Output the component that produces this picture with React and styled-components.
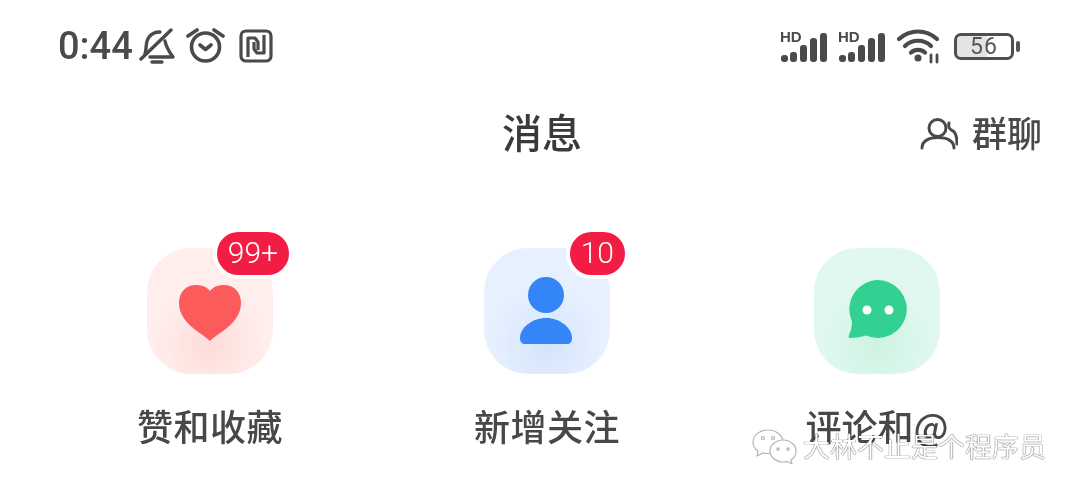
import styled, { createGlobalStyle } from "styled-components";

const GlobalStyle = createGlobalStyle`
  html, body {
    margin: 0;
    padding: 0;
    background: #fff;
  }
  body {
    font-family: "Noto Sans CJK SC", "Noto Sans", sans-serif;
  }
`;

const Page = styled.div`
  position: relative;
  width: 1080px;
  height: 494px;
  overflow: hidden;
  background: #fff;
  filter: blur(0.6px);
`;

const StatusBar = styled.div`
  height: 92px;
  box-sizing: border-box;
  padding: 28px 59px 0 58px;
  display: flex;
  justify-content: space-between;
  align-items: flex-start;
`;

const StatusGroup = styled.div`
  height: 36px;
  display: flex;
  align-items: center;
`;

const Time = styled.span`
  font-family: Roboto, sans-serif;
  font-size: 38px;
  font-weight: 500;
  line-height: 36px;
  color: #4a4a4a;
  margin-right: 6px;
`;

const SignalBox = styled.div`
  position: relative;
  width: 48px;
  height: 36px;
  margin-right: 10px;
`;

const HdText = styled.span`
  position: absolute;
  left: 0;
  top: 1px;
  font-family: "Liberation Sans", sans-serif;
  font-weight: 700;
  font-size: 15px;
  line-height: 15px;
  color: #4a4a4a;
`;

const Battery = styled.div`
  position: relative;
  width: 60px;
  height: 27px;
  margin-left: 12px;
  margin-right: 7px;
  box-sizing: border-box;
  border: 3px solid #4f4f4f;
  border-radius: 7px;
  display: flex;
  align-items: center;
  justify-content: center;
  font-family: Roboto, sans-serif;
  font-size: 23px;
  letter-spacing: 1px;
  color: #555;
  background: linear-gradient(90deg, #e4e4e4 56%, #fff 56%);
  background-clip: padding-box;
  &::after {
    content: "";
    position: absolute;
    right: -9px;
    top: 5px;
    width: 4px;
    height: 11px;
    border-radius: 2px;
    background: #555;
  }
`;

const Header = styled.div`
  height: 82px;
  box-sizing: border-box;
  display: grid;
  grid-template-columns: 1fr auto 1fr;
  align-items: center;
  padding: 0 38px 4px 42px;
`;

const Title = styled.h1`
  grid-column: 2;
  margin: 0;
  font-size: 40px;
  font-weight: 500;
  line-height: 1;
  color: #3a3a3a;
`;

const GroupChat = styled.div`
  justify-self: end;
  display: flex;
  align-items: center;
  gap: 14px;
  font-size: 35px;
  font-weight: 500;
  line-height: 1;
  color: #4a4a4a;
`;

const PeopleSvg = styled.svg`
  margin-top: 5px;
`;

const Entries = styled.div`
  margin-top: 74px;
  padding-left: 110px;
  display: grid;
  grid-template-columns: 337px 330px 200px;
`;

const Entry = styled.div`
  width: 200px;
  display: flex;
  flex-direction: column;
  align-items: center;
`;

const Tile = styled.div`
  position: relative;
  box-sizing: border-box;
  width: 126px;
  height: 126px;
  padding: ${(p) => p.$pad || "0"};
  border-radius: 44px;
  display: flex;
  align-items: center;
  justify-content: center;
  background: radial-gradient(circle at 50% 76%, ${(p) => p.$glow} 0%, ${(p) => p.$bg} 48%);
`;

const Badge = styled.span`
  position: absolute;
  top: -20px;
  right: ${(p) => p.$right}px;
  box-sizing: border-box;
  height: 51px;
  min-width: 63px;
  padding: 0 11px;
  border: 4px solid #fff;
  border-radius: 26px;
  background: #f31c44;
  color: #fff;
  font-family: Roboto, sans-serif;
  font-size: 30px;
  font-weight: 300;
  line-height: 42px;
  text-align: center;
`;

const Label = styled.div`
  margin-top: 28px;
  font-size: 36px;
  font-weight: 500;
  line-height: 46px;
  letter-spacing: ${(p) => p.$spacing ?? 0.5}px;
  white-space: nowrap;
  color: #484848;
`;

const Watermark = styled.div`
  position: absolute;
  left: 752px;
  top: 428px;
  display: flex;
  align-items: center;
  gap: 5px;
  font-size: 27px;
  line-height: 36px;
  white-space: nowrap;
  color: #fff;
  text-shadow: 0 0 1px rgba(0, 0, 0, 0.75), 0 0 1px rgba(0, 0, 0, 0.5);
`;

function BellOff() {
  return (
    <svg width="36" height="36" viewBox="0 0 36 36" fill="none" stroke="#4a4a4a" strokeWidth="3.4" strokeLinecap="round" strokeLinejoin="round">
      <path d="M2 31 32 2" />
      <path d="M6 26C8 20 6 14 10 9 13 5 17 4 21 4" />
      <path d="M26 13C27 18 28 21 34 29H11" />
      <path d="M13 34H23" />
    </svg>
  );
}

function AlarmClock() {
  return (
    <svg width="40" height="36" viewBox="0 0 40 36" fill="none" stroke="#4a4a4a" strokeWidth="3.6" strokeLinecap="round" strokeLinejoin="round" style={{ marginLeft: 11 }}>
      <circle cx="19.5" cy="19" r="14" />
      <path d="M14 17 19.500 21.500 25 17" />
      <path d="M2 8 11 2" />
      <path d="M37 8 28 2" />
    </svg>
  );
}

function NfcIcon() {
  return (
    <svg width="34" height="34" viewBox="0 0 34 34" fill="none" stroke="#4a4a4a" strokeWidth="3.2" strokeLinejoin="round" style={{ marginLeft: 13 }}>
      <rect x="2" y="2" width="30" height="30" rx="5" />
      <path d="M9 28V9h7l3 4v8" />
      <path d="M25 6v18h-7l-3-4v-7" />
    </svg>
  );
}

function SignalBars() {
  const bars = [
    { x: 1, top: 27 },
    { x: 10, top: 24 },
    { x: 20, top: 17 },
    { x: 30, top: 10 },
    { x: 40, top: 5 },
  ];
  return (
    <svg width="48" height="36" viewBox="0 0 48 36">
      {bars.map((b) => (
        <rect key={b.x} x={b.x} y={b.top} width="7" height={34 - b.top} rx="3" fill="#4a4a4a" />
      ))}
    </svg>
  );
}

function WifiIcon() {
  return (
    <svg width="46" height="36" viewBox="0 0 46 36" fill="none" stroke="#4a4a4a" strokeWidth="4.200" strokeLinecap="round">
      <path d="M3 11C14 1 30 1 41 11" />
      <path d="M9 18C16 11 28 11 35 18" />
      <path d="M15 24.500C19 21 25 21 29 24.500" />
      <circle cx="22" cy="30" r="3.500" fill="#4a4a4a" stroke="none" />
      <path d="M35 27v7M41 27v7" strokeWidth="2.800" />
    </svg>
  );
}

function PeopleIcon() {
  return (
    <PeopleSvg width="38" height="34" viewBox="0 0 38 34" fill="none" stroke="#4a4a4a" strokeWidth="3" strokeLinecap="round" strokeLinejoin="round">
      <circle cx="17.500" cy="11" r="8.500" />
      <path d="M2 31C2 24 9 20.500 18 20.500S34 24 34 31" />
      <path d="M29 6C28 10 30 13 33 14 36 16 37 22 37 27" />
    </PeopleSvg>
  );
}

function HeartIcon() {
  return (
    <svg width="64" height="58" viewBox="0 0 64 58">
      <path d="M32 57C26 50 1 40 1 19 1 8 8 1 18 1c6 0 11 2 14 6 3-4 8-6 14-6 10 0 17 7 17 18 0 21-25 31-31 38z" fill="#fc5b5b" />
    </svg>
  );
}

function PersonIcon() {
  return (
    <svg width="54" height="68" viewBox="0 0 54 68">
      <circle cx="26" cy="18" r="18" fill="#3485f7" />
      <path d="M26 41c14 0 26 10 26 20 0 4-2 6-5 6H5c-3 0-5-2-5-6 0-10 12-20 26-20z" fill="#3485f7" />
    </svg>
  );
}

function ChatIcon() {
  return (
    <svg width="60" height="60" viewBox="0 0 60 60">
      <path d="M31 1a29 29 0 1 1-12 55.500C14 58 8 59 4 59c-2 0-3-1-2-3 2-4 3-9 3-14A29 29 0 0 1 31 1z" fill="#33d191" />
      <circle cx="20" cy="31" r="4.500" fill="#fff" />
      <circle cx="42" cy="31" r="4.500" fill="#fff" />
    </svg>
  );
}

function WechatMark() {
  return (
    <svg width="46" height="36" viewBox="0 0 46 36" fill="#fff" stroke="#b4b4b4" strokeWidth="1.200">
      <path d="M16 2C8 2 1 7 1 14c0 4 2 7 5 9l-1 5 6-3c2 .5 3 .5 5 .5 8 0 15-5 15-11.500S24 2 16 2z" />
      <path d="M31 12c-7 0-13 5-13 11s6 11 13 11c2 0 3 0 4-.5l5 2.500-1-4c3-2 5-5 5-9 0-6-6-11-13-11z" />
      <circle cx="11" cy="10" r="1.500" />
      <circle cx="21" cy="10" r="1.500" />
      <circle cx="26" cy="21" r="1.200" />
      <circle cx="36" cy="21" r="1.200" />
    </svg>
  );
}

export default function App() {
  return (
    <Page>
      <GlobalStyle />
      <StatusBar>
        <StatusGroup>
          <Time>0:44</Time>
          <BellOff />
          <AlarmClock />
          <NfcIcon />
        </StatusGroup>
        <StatusGroup>
          <SignalBox>
            <HdText>HD</HdText>
            <SignalBars />
          </SignalBox>
          <SignalBox>
            <HdText>HD</HdText>
            <SignalBars />
          </SignalBox>
          <WifiIcon />
          <Battery>56</Battery>
        </StatusGroup>
      </StatusBar>
      <Header>
        <Title>消息</Title>
        <GroupChat>
          <PeopleIcon />
          群聊
        </GroupChat>
      </Header>
      <Entries>
        <Entry>
          <Tile $bg="#ffeeec" $glow="#fddcd9" $pad="4px 0 0">
            <HeartIcon />
            <Badge $right={-20}>99+</Badge>
          </Tile>
          <Label>赞和收藏</Label>
        </Entry>
        <Entry>
          <Tile $bg="#e6f0fe" $glow="#d4e3fd">
            <PersonIcon />
            <Badge $right={-19}>10</Badge>
          </Tile>
          <Label>新增关注</Label>
        </Entry>
        <Entry>
          <Tile $bg="#e0f8ef" $glow="#cdf3e3" $pad="0 0 4px">
            <ChatIcon />
          </Tile>
          <Label $spacing={0}>评论和@</Label>
        </Entry>
      </Entries>
      <Watermark>
        <WechatMark />
        大林不止是个程序员
      </Watermark>
    </Page>
  );
}
